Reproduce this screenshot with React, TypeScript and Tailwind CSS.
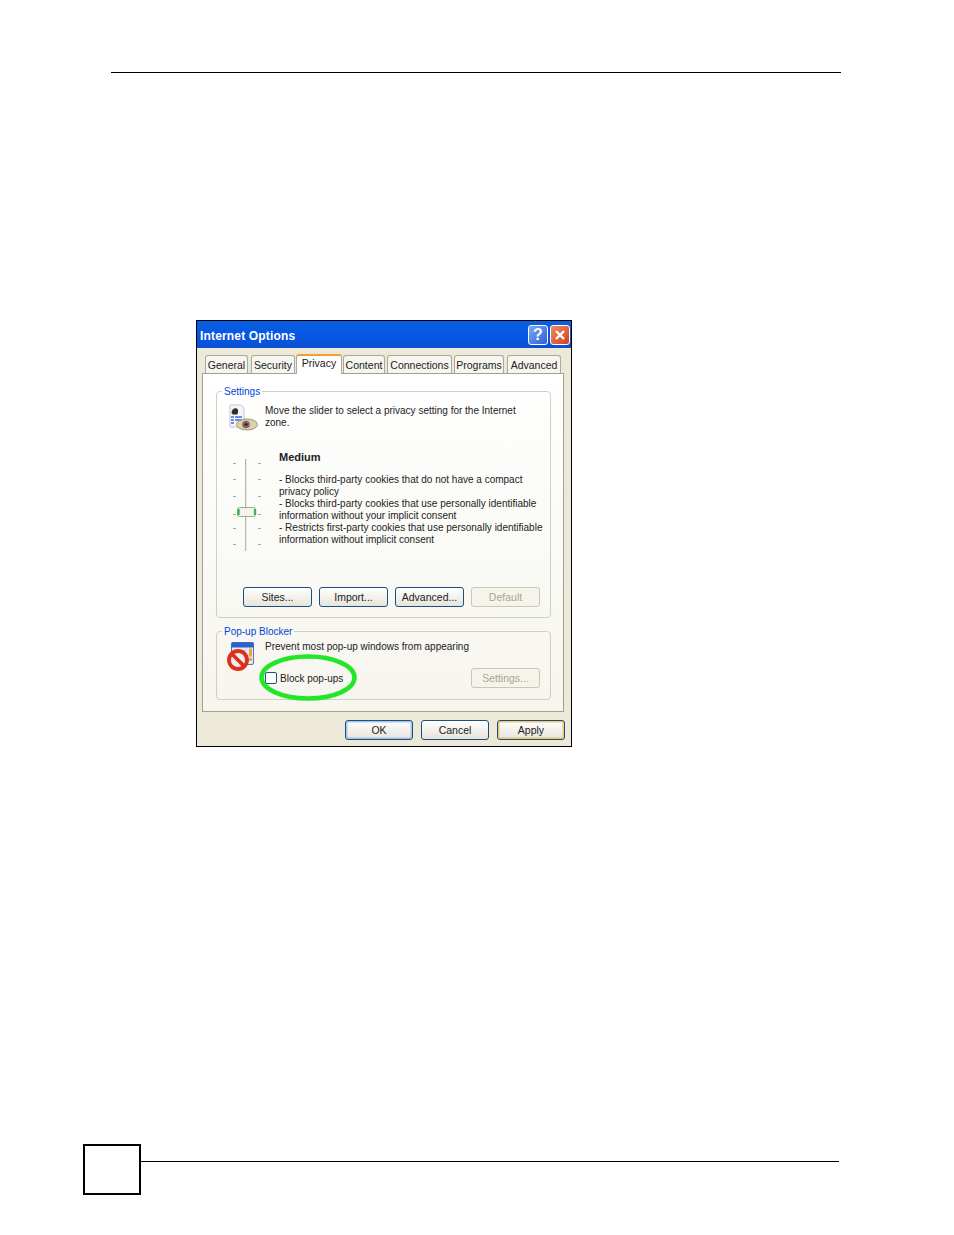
import React from 'react';

const font = "font-['Liberation_Sans',Arial,sans-serif]";

const tabs = [
  { label: 'General', cls: 'w-[43px]' },
  { label: 'Security', cls: 'ml-[3px] w-[44px]' },
  { label: 'Privacy', cls: 'ml-[1px] w-[46px]', active: true },
  { label: 'Content', cls: 'ml-[1px] w-[42px]' },
  { label: 'Connections', cls: 'ml-[2px] w-[65px]' },
  { label: 'Programs', cls: 'ml-[2px] w-[50px]' },
  { label: 'Advanced', cls: 'ml-[3px] w-[54px]' },
];

const XpButton = ({ label, disabled, tone, w = 'w-[69px]', pad = '' }: { label: string; disabled?: boolean; tone?: 'ok' | 'apply'; w?: string; pad?: string }) => (
  <div
    className={`flex h-[20px] items-center justify-center rounded-[3px] border text-[10.5px] ${w} ${pad} ${
      disabled
        ? 'border-[#c9c7ba] bg-[#f5f4ea] text-[#a6a595]'
        : 'border-[#1c4f80] bg-gradient-to-b from-white to-[#e6e4da] text-[#222]'
    } ${tone === 'ok' ? 'shadow-[inset_0_0_0_1.5px_#a9c4ea]' : ''} ${tone === 'apply' ? 'shadow-[inset_0_0_0_1.5px_#f2c46d]' : ''}`}
  >
    {label}
  </div>
);

const Group = ({ title, className, children }: { title: string; className: string; children: React.ReactNode }) => (
  <fieldset className={`mx-[13px] w-[335px] rounded-[4px] border border-[#d0d0bf] ${className}`}>
    <legend className="ml-[5px] px-[2px] text-[10px] leading-[14px] text-[#0046d5]">
      <span className="relative top-[1px]">{title}</span>
    </legend>
    {children}
  </fieldset>
);

const PrivacyIcon = () => (
  <svg width="30" height="28" viewBox="0 0 30 28" className="shrink-0">
    <path d="M2 1h11l3 3v19H2z" fill="#f4f5fb" stroke="#c3c6d4" />
    <path d="M3.500 9c0-5 5.500-6 6.500-3v3l-1 1.500H5z" fill="#2c2c2c" />
    <path d="M3 13h3M3 16h3M3 19h3M7 13h7M7 16h7" stroke="#4a6ae0" strokeWidth="1.3" />
    <ellipse cx="19" cy="20.500" rx="10.500" ry="5.500" fill="#d9d2a6" stroke="#a09a72" />
    <circle cx="18" cy="20.500" r="3.800" fill="#8a6070" />
    <circle cx="18" cy="20.500" r="1.600" fill="#3a2a2a" />
  </svg>
);

const PopupIcon = () => (
  <svg width="28" height="30" viewBox="0 0 28 30" className="mt-[2px] shrink-0">
    <rect x="4.500" y="0.500" width="22" height="22" rx="1.500" fill="#e4e9f7" stroke="#4f74c8" />
    <rect x="4.500" y="0.500" width="22" height="5" fill="#2f62c9" />
    <path d="M10 9h9M10 12h9" stroke="#9cb0dc" />
    <path d="M23.500 6.500v8" stroke="#f0a020" strokeWidth="2.800" />
    <rect x="22.100" y="16" width="2.800" height="2.800" fill="#f0a020" />
    <circle cx="11" cy="18" r="9" fill="#eee" stroke="#de3018" strokeWidth="3.800" />
    <path d="M5 12l12 12" stroke="#de3018" strokeWidth="3.800" />
  </svg>
);

const Slider = () => {
  const ticks = [4, 20, 37, 55, 69, 85];
  return (
    <svg width="34" height="92" viewBox="0 0 34 92" className="shrink-0">
      <path d="M14.500 0v92" stroke="#b8b8ac" strokeWidth="1" />
      <path d="M15.500 0v92" stroke="#ece9e0" strokeWidth="1" />
      {ticks.map(y => (
        <g key={y} stroke="#a8a89e">
          <path d={`M2 ${y + 0.5}h3`} />
          <path d={`M27 ${y + 0.5}h3`} />
        </g>
      ))}
      <rect x="6.500" y="48.500" width="18" height="9" rx="2" fill="#f4f3ec" stroke="#9aa898" />
      <path d="M7.500 50v6M24 50v6" stroke="#3cb550" strokeWidth="2.400" />
    </svg>
  );
};

export default function App() {
  return (
    <div className={`h-[1235px] w-[954px] overflow-hidden bg-white ${font}`}>
      <div className="ml-[111px] mt-[72px] h-px w-[730px] bg-black" />

      <div className="ml-[196px] mt-[247px] flex h-[427px] w-[376px] flex-col border border-black bg-[#ece9d8]">
        <div className="flex h-[27px] items-center justify-between bg-gradient-to-b from-[#0a5fe0] via-[#0558e4] to-[#0a50d2] pl-[3px] pr-[1px]">
          <span className="pt-[2px] text-[12px] font-bold tracking-[0.16px] text-white">Internet Options</span>
          <div className="flex gap-[2px]">
            <div className="flex h-[20px] w-[20px] items-center justify-center rounded-[3px] border border-white bg-gradient-to-br from-[#7fa8f4] to-[#2a5fd8] text-[16px] font-bold text-white">?</div>
            <div className="flex h-[20px] w-[20px] items-center justify-center rounded-[3px] border border-white bg-gradient-to-br from-[#ec8a66] to-[#cf4020]">
              <svg width="12" height="12" viewBox="0 0 12 12">
                <path d="M2 2l8 8M10 2l-8 8" stroke="#fff" strokeWidth="2.400" />
              </svg>
            </div>
          </div>
        </div>

        <div className="ml-[8px] mt-[5px] flex h-[20px] items-end text-[10.5px] text-[#222]">
          {tabs.map(t =>
            t.active ? (
              <div
                key={t.label}
                className={`z-10 -mb-px flex h-[20px] items-start justify-center rounded-t-[3px] border-x border-t-[2px] border-x-[#a9a99c] border-t-[#f0a030] bg-white ${t.cls}`}
              >
                {t.label}
              </div>
            ) : (
              <div
                key={t.label}
                className={`flex h-[18px] items-center justify-center rounded-t-[3px] border-x border-t border-[#a9a99c] bg-[#f6f5ef] pt-[2px] ${t.cls}`}
              >
                {t.label}
              </div>
            ),
          )}
        </div>

        <div className="ml-[5px] flex h-[339px] w-[362px] flex-col border border-[#a0a094] bg-gradient-to-b from-white to-[#f6f5ee] text-[10px] leading-[12px] text-[#222]">
          <Group title="Settings" className="mt-[10px] h-[234px]">
            <div className="flex gap-[7px] pl-[11px] pt-[6px]">
              <PrivacyIcon />
              <p className="w-[262px] pt-[1px] leading-[12px]">Move the slider to select a privacy setting for the Internet zone.</p>
            </div>
            <div className="mt-[19px] flex pl-[14px]">
              <div className="mt-[8px]">
                <Slider />
              </div>
              <div className="ml-[14px] w-[270px]">
                <p className="text-[11px] font-bold">Medium</p>
                <p className="mt-[11px]">- Blocks third-party cookies that do not have a compact privacy policy</p>
                <p>- Blocks third-party cookies that use personally identifiable information without your implicit consent</p>
                <p>- Restricts first-party cookies that use personally identifiable information without implicit consent</p>
              </div>
            </div>
            <div className="mt-[36px] flex gap-[7px] pl-[26px]">
              <XpButton label="Sites..." />
              <XpButton label="Import..." />
              <XpButton label="Advanced..." />
              <XpButton label="Default" disabled />
            </div>
          </Group>

          <Group title="Pop-up Blocker" className="mt-[6px] h-[76px]">
            <div className="flex gap-[10px] pl-[10px] pt-[2px]">
              <PopupIcon />
              <p className="pt-[1px]">Prevent most pop-up windows from appearing</p>
            </div>
            <div className="-mt-[4px] flex items-center justify-between pl-[48px] pr-[10px]">
              <div className="relative flex items-center gap-[3px]">
                <div className="h-[12px] w-[12px] rounded-[2px] border border-[#1c5180] bg-white" />
                <span className="pt-[1px]">Block pop-ups</span>
                <svg width="98" height="47" viewBox="0 0 98 47" className="absolute left-[-6px] top-[-18px]">
                  <ellipse cx="49" cy="23.500" rx="46.500" ry="21" fill="none" stroke="#22e626" strokeWidth="4.500" />
                </svg>
              </div>
              <XpButton label="Settings..." disabled />
            </div>
          </Group>
        </div>

        <div className="mt-[8px] flex justify-end gap-[8px] pr-[6px]">
          <XpButton label="OK" tone="ok" w="w-[68px]" pad="pt-[2px]" />
          <XpButton label="Cancel" w="w-[68px]" pad="pt-[2px]" />
          <XpButton label="Apply" tone="apply" w="w-[68px]" pad="pt-[2px]" />
        </div>
      </div>

      <div className="ml-[83px] mt-[397px] flex items-start">
        <div className="h-[51px] w-[58px] border-[2px] border-black" />
        <div className="mt-[17px] h-px w-[698px] bg-black" />
      </div>
    </div>
  );
}
